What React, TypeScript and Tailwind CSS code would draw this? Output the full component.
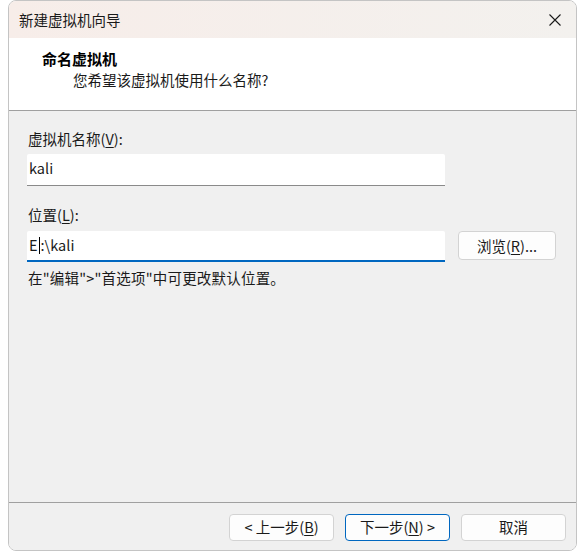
const font = { fontFamily: '"Noto Sans CJK SC", "Noto Sans", sans-serif' };

function U({ children }: { children: string }) {
  return <span className="underline underline-offset-2">{children}</span>;
}

function DlgButton({ children, primary }: { children: React.ReactNode; primary?: boolean }) {
  return (
    <button
      className={
        "h-[27px] w-[105px] rounded-[4px] bg-[#fdfdfd] text-[14.5px] text-[#1a1a1a] flex items-center justify-center leading-none " +
        (primary ? "border border-[#0067c0]" : "border border-[#d3d3d3]")
      }
    >
      {children}
    </button>
  );
}

export default function App() {
  return (
    <div className="w-[585px] h-[559px] bg-white pl-[8px]" style={font}>
      <div className="w-[569px] h-[551px] border border-[#c4c4c4] rounded-[8px] overflow-hidden flex flex-col">
        {/* title bar */}
        <div className="h-[37px] shrink-0 flex items-center justify-between pl-[10px] pr-[13px] bg-[linear-gradient(90deg,#f7ede9,#f3f1ee)]">
          <span className="text-[14.5px] text-[#1a1a1a]">新建虚拟机向导</span>
          <svg width="14" height="14" viewBox="0 0 14 14" className="mr-[1px]">
            <path d="M1.5 1.5 L12.5 12.5 M12.5 1.5 L1.5 12.5" stroke="#1a1a1a" strokeWidth="1.1" fill="none" />
          </svg>
        </div>

        {/* header */}
        <div className="h-[73px] shrink-0 bg-white border-b border-[#a0a0a0] pl-[33px] pt-[10px]">
          <div className="text-[15px] font-bold text-black leading-[22px]">命名虚拟机</div>
          <div className="text-[14.5px] text-[#1a1a1a] leading-[20px] pl-[31px]">您希望该虚拟机使用什么名称?</div>
        </div>

        {/* body */}
        <div className="flex-1 bg-[#f0f0f0] pl-[18px] pt-[18px] text-[14.5px] text-[#1a1a1a]">
          <div className="pl-[1px] leading-[20px]">
            虚拟机名称(<U>V</U>):
          </div>
          <div className="mt-[5px] w-[418px] h-[32px] bg-white border-b border-[#8a8a8a] rounded-t-[2px] flex items-center pl-[2px] pb-[3px]">
            kali
          </div>
          <div className="mt-[19px] pl-[1px] leading-[20px]">
            位置(<U>L</U>):
          </div>
          <div className="mt-[6px] flex items-start gap-[13px]">
            <div className="w-[418px] h-[31px] bg-white border-b-2 border-[#0067c0] rounded-t-[2px] flex items-center pl-[2px] pb-[1px]">
              E<span className="inline-block w-[1px] h-[17px] bg-black mx-[1px]" />:\kali
            </div>
            <button className="w-[98px] h-[29px] rounded-[4px] border border-[#d3d3d3] bg-[#fdfdfd] flex items-center justify-center">
              浏览(<U>R</U>)...
            </button>
          </div>
          <div className="mt-[6px] pl-[1px] leading-[20px] tracking-[0.2px]">在"编辑"&gt;"首选项"中可更改默认位置。</div>
        </div>

        {/* footer */}
        <div className="h-[48px] shrink-0 bg-[#f0f0f0] border-t border-[#a0a0a0] flex items-start justify-end gap-[11px] pt-[11px] pr-[10px]">
          <DlgButton>
            &lt;&nbsp;上一步(<U>B</U>)
          </DlgButton>
          <DlgButton primary>
            下一步(<U>N</U>)&nbsp;&gt;
          </DlgButton>
          <DlgButton>取消</DlgButton>
        </div>
      </div>
    </div>
  );
}
